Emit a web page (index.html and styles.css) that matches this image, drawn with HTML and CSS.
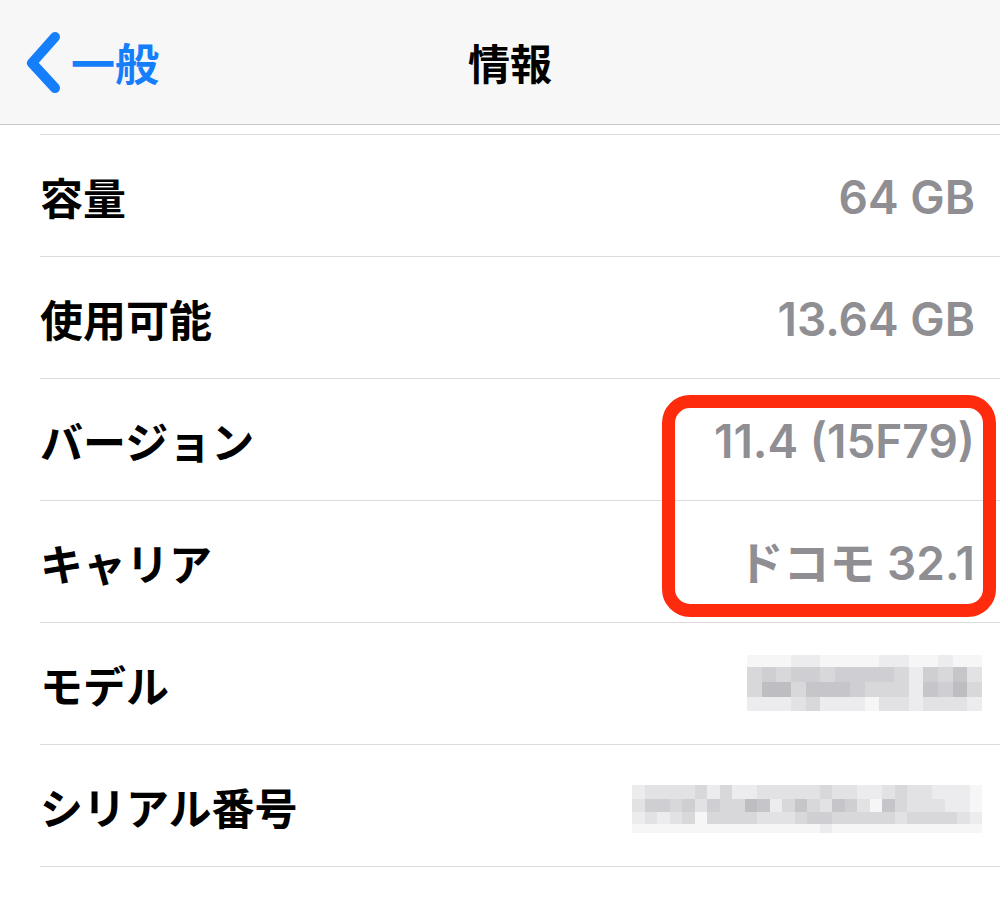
FILE: index.html
```html
<!DOCTYPE html>
<html lang="ja">
<head>
<meta charset="utf-8">
<title>情報</title>
<link rel="stylesheet" href="styles.css">
</head>
<body>
<header class="navbar">
  <a class="back">
    <svg class="chev" viewBox="0 0 44 66" width="44" height="66"><path d="M35 8 L12 34 L35 59" fill="none" stroke="#157efb" stroke-width="10" stroke-linecap="round" stroke-linejoin="round"/></svg>
    <span class="back-label">一般</span>
  </a>
  <h1 class="title">情報</h1>
  <div class="spacer"></div>
</header>
<main class="list">
  <div class="row"><span class="label">容量</span><span class="value">64 GB</span></div>
  <div class="row"><span class="label">使用可能</span><span class="value">13.64 GB</span></div>
  <div class="row"><span class="label">バージョン</span><span class="value">11.4 (15F79)</span></div>
  <div class="row"><span class="label">キャリア</span><span class="value">ドコモ 32.1</span></div>
  <div class="row"><span class="label">モデル</span>
    <div class="mosaic model">
      <i class="m0"></i><i class="m0"></i><i class="m0"></i><i class="m1"></i><i class="m1"></i><i class="m0"></i><i class="m0"></i><i class="m0"></i><i class="m0"></i><i class="m1"></i><i class="m1"></i><i class="m0"></i><i class="m0"></i><i class="m1"></i><i class="m0"></i><i class="m0"></i>
      <i class="m3"></i><i class="m4"></i><i class="m3"></i><i class="m4"></i><i class="m4"></i><i class="m3"></i><i class="m4"></i><i class="m4"></i><i class="m4"></i><i class="m4"></i><i class="m3"></i><i class="m1"></i><i class="m4"></i><i class="m3"></i><i class="m5"></i><i class="m2"></i>
      <i class="m3"></i><i class="m6"></i><i class="m6"></i><i class="m3"></i><i class="m5"></i><i class="m5"></i><i class="m5"></i><i class="m4"></i><i class="m3"></i><i class="m3"></i><i class="m3"></i><i class="m1"></i><i class="m5"></i><i class="m4"></i><i class="m6"></i><i class="m3"></i>
      <i class="m1"></i><i class="m1"></i><i class="m1"></i><i class="m2"></i><i class="m3"></i><i class="m1"></i><i class="m1"></i><i class="m1"></i><i class="m0"></i><i class="m2"></i><i class="m2"></i><i class="m1"></i><i class="m2"></i><i class="m2"></i><i class="m2"></i><i class="m1"></i>
    </div>
  </div>
  <div class="row"><span class="label">シリアル番号</span>
    <div class="mosaic serial">
      <i class="m1"></i><i class="m2"></i><i class="m2"></i><i class="m2"></i><i class="m2"></i><i class="m3"></i><i class="m1"></i><i class="m3"></i><i class="m1"></i><i class="m1"></i><i class="m2"></i><i class="m2"></i><i class="m2"></i><i class="m2"></i><i class="m2"></i><i class="m3"></i><i class="m2"></i><i class="m2"></i><i class="m1"></i><i class="m1"></i><i class="m2"></i><i class="m3"></i><i class="m2"></i><i class="m2"></i><i class="m1"></i><i class="m1"></i><i class="m1"></i><i class="m0"></i>
      <i class="m2"></i><i class="m4"></i><i class="m4"></i><i class="m3"></i><i class="m4"></i><i class="m2"></i><i class="m4"></i><i class="m3"></i><i class="m3"></i><i class="m6"></i><i class="m5"></i><i class="m1"></i><i class="m3"></i><i class="m5"></i><i class="m3"></i><i class="m2"></i><i class="m5"></i><i class="m4"></i><i class="m2"></i><i class="m0"></i><i class="m5"></i><i class="m3"></i><i class="m2"></i><i class="m2"></i><i class="m2"></i><i class="m1"></i><i class="m1"></i><i class="m0"></i>
      <i class="m1"></i><i class="m2"></i><i class="m1"></i><i class="m2"></i><i class="m3"></i><i class="m0"></i><i class="m3"></i><i class="m3"></i><i class="m3"></i><i class="m3"></i><i class="m2"></i><i class="m2"></i><i class="m2"></i><i class="m3"></i><i class="m4"></i><i class="m4"></i><i class="m3"></i><i class="m3"></i><i class="m3"></i><i class="m3"></i><i class="m3"></i><i class="m2"></i><i class="m3"></i><i class="m3"></i><i class="m3"></i><i class="m3"></i><i class="m2"></i><i class="m1"></i>
      <i class="m0"></i><i class="m0"></i><i class="m0"></i><i class="m0"></i><i class="m0"></i><i class="m0"></i><i class="m0"></i><i class="m0"></i><i class="m0"></i><i class="m0"></i><i class="m0"></i><i class="m0"></i><i class="m0"></i><i class="m0"></i><i class="m0"></i><i class="m1"></i><i class="m0"></i><i class="m0"></i><i class="m0"></i><i class="m0"></i><i class="m0"></i><i class="m0"></i><i class="m0"></i><i class="m0"></i><i class="m0"></i><i class="m0"></i><i class="m0"></i><i class="m0"></i>
    </div>
  </div>
</main>
<div class="highlight"></div>
</body>
</html>
```
FILE: styles.css
```css
* { box-sizing: border-box; }
html, body { margin: 0; padding: 0; }
body {
  width: 1000px;
  height: 901px;
  overflow: hidden;
  background: #ffffff;
  font-family: "Noto Sans CJK JP", sans-serif;
  position: relative;
}
.navbar {
  height: 125px;
  background: #f7f7f7;
  border-bottom: 1px solid #c8c8cc;
  display: grid;
  grid-template-columns: 1fr auto 1fr;
  align-items: center;
  padding-left: 20px;
}
.back {
  display: flex;
  align-items: center;
  color: #157efb;
}
.chev { display: block; }
.back-label {
  font-size: 44px;
  font-weight: 700;
  margin-left: 7px;
  line-height: 1;
}
.title {
  margin: 0;
  font-size: 42px;
  font-weight: 700;
  color: #000;
  line-height: 1;
}
.list {
  margin-top: 9px;
  margin-left: 40px;
  border-top: 1px solid #dcdcde;
}
.row {
  height: 122px;
  border-bottom: 1px solid #dcdcde;
  display: flex;
  align-items: center;
  justify-content: space-between;
  padding-right: 25px;
  padding-top: 2px;
}
.label {
  font-size: 43px;
  font-weight: 700;
  color: #000;
  line-height: 1;
}
.value {
  font-family: "Inter", "Noto Sans CJK JP", sans-serif;
  font-size: 46px;
  font-weight: 600;
  color: #8e8e93;
  line-height: 1;
}
.mosaic {
  display: grid;
  margin-right: -7px;
}
.mosaic.model {
  grid-template-columns: repeat(16, 14.7px);
  grid-template-rows: 12px 15px 15px 14px;
  margin-top: -4px;
}
.mosaic.serial {
  grid-template-columns: repeat(28, 12.5px);
  grid-template-rows: 14px 13px 12px 9px;
  margin-top: 4px;
}
.mosaic i { display: block; }
.m0 { background: #f6f6f7; }
.m1 { background: #ececee; }
.m2 { background: #e2e2e5; }
.m3 { background: #d8d8db; }
.m4 { background: #cfcfd3; }
.m5 { background: #c6c6ca; }
.m6 { background: #bdbdc2; }
.highlight {
  position: absolute;
  left: 662px;
  top: 395px;
  width: 334px;
  height: 222px;
  border: 13px solid #fe2c0c;
  border-radius: 28px;
}
```
